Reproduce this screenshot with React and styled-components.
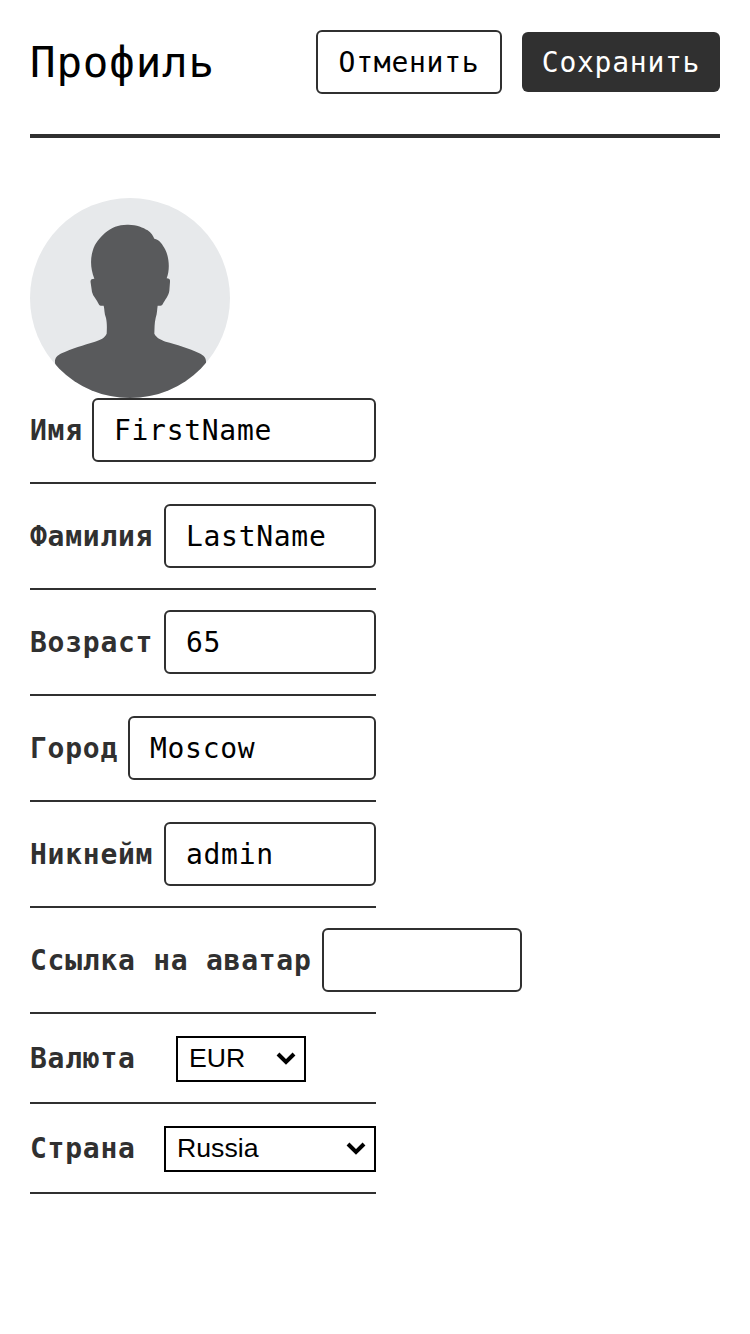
import React from "react";
import styled, { createGlobalStyle } from "styled-components";

const ink = "#303030";
const mono = `"DejaVu Sans Mono", "Liberation Mono", monospace`;

const GlobalStyle = createGlobalStyle`
  *, *::before, *::after { box-sizing: border-box; }
  body { margin: 0; background: #fff; color: #000; font-family: ${mono}; }
`;

const Page = styled.main`
  padding: 30px;
`;

const Header = styled.header`
  display: flex;
  align-items: center;
  height: 108px;
  padding-bottom: 40px;
  border-bottom: 4px solid ${ink};
  margin-bottom: 60px;
`;

const Title = styled.h1`
  margin: 0 auto 0 0;
  padding-top: 2px;
  font-size: 42.5px;
  font-weight: 400;
  line-height: 56px;
  letter-spacing: 0.82px;
`;

const Button = styled.button`
  flex: none;
  width: ${(p) => (p.$filled ? 198 : 186)}px;
  height: ${(p) => (p.$filled ? 60 : 64)}px;
  margin-left: ${(p) => (p.$filled ? 20 : 0)}px;
  padding: 2px 0 0;
  border: ${(p) => (p.$filled ? "none" : `2px solid ${ink}`)};
  border-radius: 6px;
  background: ${(p) => (p.$filled ? ink : "#fff")};
  color: ${(p) => (p.$filled ? "#fff" : "#000")};
  font: 400 28px/36px ${mono};
  letter-spacing: 0.74px;
`;

const Avatar = styled.svg`
  display: block;
  width: 200px;
  height: 200px;
  border-radius: 50%;
`;

const Form = styled.form`
  width: 346px;
`;

const Row = styled.div`
  display: flex;
  align-items: center;
  width: 346px;
  margin-bottom: ${(p) => (p.$gap || 20)}px;
  padding-bottom: 20px;
  border-bottom: 2px solid ${ink};
`;

const Label = styled.label`
  flex: none;
  width: ${(p) => p.$width}px;
  padding-top: ${(p) => p.$drop || 0}px;
  color: ${ink};
  font-size: 28px;
  font-weight: 700;
  line-height: 36px;
  letter-spacing: 0.74px;
  white-space: nowrap;
`;

const Input = styled.input`
  flex: 1 0 ${(p) => p.$min || 0}px;
  width: 0;
  height: 64px;
  padding: 0 20px;
  border: 2px solid ${ink};
  border-radius: 6px;
  outline: none;
  background: #fff;
  color: #000;
  font: 400 28px/36px ${mono};
  letter-spacing: 0.7px;
`;

const SelectBox = styled.div`
  position: relative;
  flex: none;
  width: ${(p) => p.$width}px;
  height: 46px;
`;

const Select = styled.select`
  appearance: none;
  display: block;
  width: 100%;
  height: 100%;
  padding: 0 0 2px 11px;
  border: 2px solid #000;
  border-radius: 0;
  background: #fff;
  color: #000;
  font: 400 26.67px/32px "Liberation Sans", Arial, sans-serif;
`;

const Chevron = styled.svg`
  position: absolute;
  top: 15px;
  right: 10px;
  width: 20px;
  height: 14px;
  pointer-events: none;
`;

const fields = [
  { id: "first", label: "Имя", value: "FirstName", width: 62 },
  { id: "last", label: "Фамилия", value: "LastName", width: 134 },
  { id: "age", label: "Возраст", value: "65", width: 134 },
  { id: "city", label: "Город", value: "Moscow", width: 98 },
  { id: "username", label: "Никнейм", value: "admin", width: 134 },
  { id: "avatar", label: "Ссылка на аватар", value: "", width: 292, min: 200, gap: 22 },
];

const selects = [
  { id: "currency", label: "Валюта", value: "EUR", width: 146, box: 130 },
  { id: "country", label: "Страна", value: "Russia", width: 134, box: 212 },
];

export default function App() {
  return (
    <Page>
      <GlobalStyle />
      <Header>
        <Title>Профиль</Title>
        <Button type="button">Отменить</Button>
        <Button type="button" $filled>Сохранить</Button>
      </Header>
      <Avatar viewBox="30 24 600 600" aria-hidden="true">
        <rect x="30" y="24" width="600" height="600" fill="#e7e9eb" />
        <path
          fill="#595a5c"
          d="M321 104C348 103 369 112 383 121C394 129 399 137 403 146C417 148 428 163 436 179C448 203 450 241 440 265C448 266 451 268 450 276L448 302C446 318 434 330 428 343C425 348 419 348 413 347C411 357 412 369 407 384C403 400 404 414 403 431C409 443 420 448 437 455C468 463 508 475 538 490C552 497 559 503 558 519L530 624H130L105 519C104 503 111 497 125 490C154 476 192 465 225 455C242 449 254 444 260 431C261 413 261 397 258 384C252 369 254 357 251 347C244 348 239 348 236 342C231 330 219 319 216 306L212 278C210 269 215 266 223 266C212 239 210 209 218 183C225 158 240 144 254 130C275 112 295 104 321 104Z"
        />
      </Avatar>
      <Form>
        {fields.map((f) => (
          <Row key={f.id} $gap={f.gap}>
            <Label htmlFor={f.id} $width={f.width} $drop={2}>{f.label}</Label>
            <Input id={f.id} defaultValue={f.value} $min={f.min} />
          </Row>
        ))}
        {selects.map((s) => (
          <Row key={s.id} $gap={22}>
            <Label htmlFor={s.id} $width={s.width}>{s.label}</Label>
            <SelectBox $width={s.box}>
              <Select id={s.id} defaultValue={s.value}>
                <option>{s.value}</option>
              </Select>
              <Chevron viewBox="0 0 20 14" aria-hidden="true">
                <path d="M2 3L10 11L18 3" fill="none" stroke="#000" strokeWidth="4" />
              </Chevron>
            </SelectBox>
          </Row>
        ))}
      </Form>
    </Page>
  );
}
